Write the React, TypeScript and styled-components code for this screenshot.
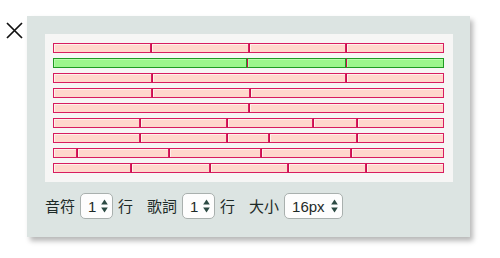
import styled, { createGlobalStyle } from "styled-components";

const GlobalStyle = createGlobalStyle`
  html, body {
    margin: 0;
    padding: 0;
    background: #ffffff;
  }
  body {
    font-family: "Liberation Sans", "Noto Sans CJK TC", sans-serif;
    color: #1d2a27;
  }
`;

interface LineData {
  segs: number[];
  active?: boolean;
}

const lines: LineData[] = [
  { segs: [98, 98, 97, 98] },
  { segs: [195, 98, 98], active: true },
  { segs: [98, 195, 98] },
  { segs: [98, 98, 195] },
  { segs: [196, 195] },
  { segs: [87, 87, 87, 43, 87] },
  { segs: [87, 87, 42, 88, 87] },
  { segs: [23, 92, 92, 91, 93] },
  { segs: [78, 79, 78, 78, 78] },
];

function Arrows() {
  return (
    <svg width="7" height="14" viewBox="0 0 7 14">
      <path d="M3.5 0.5 L6.8 5.5 L0.2 5.5 Z" fill="#2c4a43" />
      <path d="M3.5 13.5 L6.8 8.5 L0.2 8.5 Z" fill="#2c4a43" />
    </svg>
  );
}

interface PickerProps {
  value: string;
  options: string[];
  width: number;
}

function Picker({ value, options, width }: PickerProps) {
  return (
    <St.Picker $w={width}>
      <St.Select defaultValue={value}>
        {options.map((o) => (
          <option key={o} value={o}>
            {o}
          </option>
        ))}
      </St.Select>
      <Arrows />
    </St.Picker>
  );
}

function App() {
  return (
    <>
      <GlobalStyle />
      <St.Page>
        <St.Close aria-label="close">
          <svg width="17" height="17" viewBox="0 0 17 17">
            <path
              d="M1 1 L16 16 M16 1 L1 16"
              stroke="#111"
              strokeWidth="1.7"
              fill="none"
            />
          </svg>
        </St.Close>
        <St.Panel>
          <St.Preview>
            {lines.map((line, i) => (
              <St.Line key={i}>
                {line.segs.map((w, j) => (
                  <St.Seg key={j} $w={w} $active={!!line.active} />
                ))}
              </St.Line>
            ))}
          </St.Preview>
          <St.Controls>
            <St.Group>
              <St.Label>音符</St.Label>
              <Picker value="1" options={["1", "2", "3"]} width={33} />
              <St.Label>行</St.Label>
            </St.Group>
            <St.Group>
              <St.Label>歌詞</St.Label>
              <Picker value="1" options={["1", "2", "3"]} width={33} />
              <St.Label>行</St.Label>
            </St.Group>
            <St.Group>
              <St.Label>大小</St.Label>
              <Picker
                value="16px"
                options={["12px", "14px", "16px", "18px"]}
                width={59}
              />
            </St.Group>
          </St.Controls>
        </St.Panel>
      </St.Page>
    </>
  );
}

export default App;

const St = {
  Page: styled.div`
    display: flex;
    align-items: flex-start;
    width: 500px;
    height: 258px;
    padding-top: 16px;
    box-sizing: border-box;
  `,
  Close: styled.button`
    display: flex;
    width: 27px;
    margin-top: 6px;
    padding: 0 0 0 6px;
    border: none;
    background: none;
    cursor: pointer;
  `,
  Panel: styled.div`
    width: 443px;
    height: 221px;
    box-sizing: border-box;
    padding: 18px 17px 0 18px;
    background: #dce4e2;
    box-shadow: 3px 4px 5px rgba(0, 0, 0, 0.28);
  `,
  Preview: styled.div`
    display: flex;
    flex-direction: column;
    gap: 5px;
    padding: 9px 9px 9px 8px;
    background: #f6f6f5;
  `,
  Line: styled.div`
    display: flex;
    height: 10px;
  `,
  Seg: styled.div<{ $w: number; $active: boolean }>`
    flex: ${({ $w }) => $w} 0 0;
    box-sizing: border-box;
    border: 1px solid ${({ $active }) => ($active ? "#1f9a22" : "#d81d5f")};
    background: ${({ $active }) => ($active ? "#9cf68c" : "#ffd8cc")};
    box-shadow: inset 1px 1px 0
      ${({ $active }) => ($active ? "#b8fbae" : "#fff1ea")};
    & + & {
      border-left-color: ${({ $active }) => ($active ? "#1d4f22" : "#c8104f")};
    }
  `,
  Controls: styled.div`
    display: flex;
    align-items: center;
    gap: 14px;
    margin-top: 11px;
  `,
  Group: styled.div`
    display: flex;
    align-items: center;
    gap: 5px;
  `,
  Label: styled.span`
    font-family: "Noto Sans CJK TC", sans-serif;
    font-size: 15px;
    line-height: 26px;
    color: #1d2a27;
  `,
  Picker: styled.label<{ $w: number }>`
    display: flex;
    align-items: center;
    gap: 4px;
    width: ${({ $w }) => $w}px;
    height: 26px;
    box-sizing: border-box;
    padding: 0 4px 0 7px;
    border: 1px solid #a9b0ae;
    border-radius: 5px;
    background: #fdfdfd;
  `,
  Select: styled.select`
    appearance: none;
    flex: 1;
    min-width: 0;
    border: none;
    background: transparent;
    padding: 0;
    margin: 0;
    font-family: "Liberation Sans", sans-serif;
    font-size: 15px;
    color: #1d2a27;
    outline: none;
  `,
};
